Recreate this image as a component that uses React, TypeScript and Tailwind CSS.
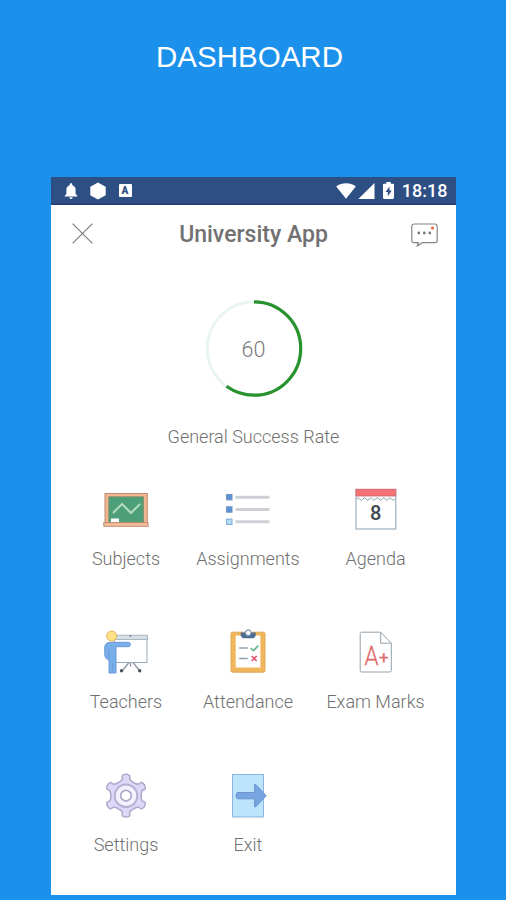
import type { ReactNode } from "react";

const RATE = 60;

const SubjectsIcon = () => (
  <svg className="w-12 h-12" viewBox="0 0 48 48" fill="none">
    <rect x="3" y="7.500" width="42.300" height="29" fill="#f0b694" stroke="#c08a6d" strokeWidth="1" />
    <rect x="6.800" y="10.800" width="34.800" height="25.500" fill="#4c9f78" stroke="#8e8a68" strokeWidth=".8" />
    <path d="M11 27l9-9 9 9 9-9" stroke="#b5dcc0" strokeWidth="2" />
    <rect x="9" y="32.500" width="8" height="3.800" fill="#fff" />
    <rect x="1.800" y="36.700" width="44.300" height="3.600" fill="#f5c09e" stroke="#c08a6d" strokeWidth="1" />
  </svg>
);

const AssignmentsIcon = () => (
  <svg className="w-12 h-12" viewBox="0 0 48 48" fill="none">
    <path d="M11.500 11.200h34M11.500 23.500h34M11.500 35.800h34" stroke="#cdd1d5" strokeWidth="3" />
    <rect x="2.600" y="8.500" width="5.400" height="5.400" fill="#5b93d6" stroke="#6d92c4" />
    <rect x="2.600" y="20.800" width="5.400" height="5.400" fill="#5b93d6" stroke="#6d92c4" />
    <rect x="2.600" y="33.100" width="5.400" height="5.400" fill="#b5def5" stroke="#7ba9d8" />
  </svg>
);

const AgendaIcon = () => (
  <svg className="w-12 h-12" viewBox="0 0 48 48" fill="none">
    <rect x="4" y="3.500" width="39.800" height="39.500" fill="#fff" stroke="#8b9fae" />
    <rect x="4" y="3.200" width="39.800" height="6.800" fill="#f47476" stroke="#d3686e" strokeWidth=".8" />
    <path
      d="M4.500 13q1.600-2.600 3.200 0t3.200 0 3.200 0 3.200 0 3.200 0 3.200 0 3.200 0 3.200 0 3.200 0 3.200 0 3.200 0 3.200 0"
      stroke="#8b9fae"
    />
    <text
      x="23.700"
      y="34"
      textAnchor="middle"
      fill="#3d4650"
      className="font-['Roboto',sans-serif] text-[20px] font-medium"
    >
      8
    </text>
  </svg>
);

const TeachersIcon = () => (
  <svg className="w-12 h-12" viewBox="0 0 48 48" fill="none">
    <path d="M27 33.500l-6.500 8M31 33.500l6.500 8M28.500 33.500v4" stroke="#8c98a3" strokeWidth="1.300" />
    <circle cx="19.500" cy="41.800" r="1.700" fill="#4b5258" />
    <circle cx="37.700" cy="41.800" r="1.700" fill="#4b5258" />
    <rect x="12.500" y="8.500" width="32.500" height="25" fill="#fff" stroke="#9babb8" />
    <rect x="12.500" y="6.200" width="33" height="4.300" fill="#d5e0e8" stroke="#9babb8" strokeWidth=".8" />
    <circle cx="28.300" cy="7" r="1" fill="#75899a" />
    <path
      d="M8 13.300H26.200a2 2 0 0 1 0 4.400H14V44H7V31C4 30.500 2.700 28 2.700 24.500V19C2.700 15.500 4.500 13.300 8 13.300z"
      fill="#78aeea"
      stroke="#6c9ad5"
    />
    <path d="M7 19.500V31M10.700 33.500v10" stroke="#6c9ad5" strokeWidth=".8" />
    <circle cx="9.700" cy="7.100" r="5" fill="#ffe188" stroke="#dfb45b" />
  </svg>
);

const AttendanceIcon = () => (
  <svg className="w-12 h-12" viewBox="0 0 48 48" fill="none">
    <rect x="7" y="3.200" width="34" height="40" rx="1.500" fill="#f1b65b" stroke="#dfa958" />
    <rect x="11.700" y="6.500" width="24.700" height="32" fill="#fff" />
    <path d="M16.700 3.500h4.500a3 3 0 0 1 6 0h4.500V7l-2 2.300h-11l-2-2.300z" fill="#4d6d94" />
    <circle cx="24.200" cy="3.800" r="2.600" fill="#fff" stroke="#8ba0b8" strokeWidth=".9" />
    <path d="M15.200 19h8.500M15.200 29.500h8.500" stroke="#93a0ab" strokeWidth="1.400" />
    <path d="M26.700 19l2.700 2.600 5-5" stroke="#65b889" strokeWidth="1.600" />
    <path d="M27.700 27l5 5M32.700 27l-5 5" stroke="#db5470" strokeWidth="1.600" />
  </svg>
);

const ExamMarksIcon = () => (
  <svg className="w-12 h-12" viewBox="0 0 48 48" fill="none">
    <path
      d="M9.700 3.200h19l10.600 11v27.300a1.500 1.500 0 0 1-1.500 1.500H9.700a1.500 1.500 0 0 1-1.500-1.500V4.700a1.500 1.500 0 0 1 1.500-1.500z"
      fill="#fff"
      stroke="#93a0a8"
    />
    <path d="M28.700 3.500v10.700h10.500" stroke="#93a0a8" />
    <text
      y="35.500"
      fill="#e06a6a"
      className="font-['Roboto',sans-serif] text-[25px] font-light"
      stroke="#e06a6a"
      strokeWidth=".3"
    >
      <tspan x="12.500" textLength="14" lengthAdjust="spacingAndGlyphs">A</tspan>
      <tspan x="27" dy="-1.500" className="text-[17px] font-normal">+</tspan>
    </text>
  </svg>
);

const gearAngles = [0, 60, 120, 180, 240, 300];

const SettingsIcon = () => (
  <svg className="w-12 h-12" viewBox="0 0 48 48" fill="none">
    <g fill="#d8d2f5" stroke="#b1a9ca" strokeWidth="2">
      <circle cx="24" cy="23.700" r="15" />
      {gearAngles.map((a) => (
        <path key={a} d="M17 11l3.500-3.500V3.800q3.500-2.400 7 0v3.700L31 11z" transform={`rotate(${a} 24 23.700)`} />
      ))}
    </g>
    <g fill="#ddd7f8">
      <circle cx="24" cy="23.700" r="14.500" />
      {gearAngles.map((a) => (
        <path key={a} d="M17 12l4-4.200V4q3-1.800 6 0v3.800L31 12z" transform={`rotate(${a} 24 23.700)`} />
      ))}
    </g>
    <circle cx="24" cy="23.700" r="11.300" fill="#f5f2ff" stroke="#b9b1d3" strokeWidth="2" />
    <circle cx="24" cy="23.700" r="5.300" fill="#fff" stroke="#b1a9ca" strokeWidth="1.800" />
  </svg>
);

const ExitIcon = () => (
  <svg className="w-12 h-12" viewBox="0 0 48 48" fill="none">
    <rect x="8.500" y="2.500" width="31" height="42.500" fill="#bce4fb" stroke="#8fb5de" />
    <path
      d="M13.700 20.500h16.800v-7.400q.3-1.500 1.500-.4l10.200 11L32 34.600q-1.200 1-1.500-.5v-7.300H13.700a2 2 0 0 1-1.500-1.700v-3a2 2 0 0 1 1.500-1.600z"
      fill="#77a5df"
      stroke="#6a93d0"
    />
  </svg>
);

type MenuItem = {
  label: string;
  icon: ReactNode;
};

const menu: MenuItem[] = [
  { label: "Subjects", icon: <SubjectsIcon /> },
  { label: "Assignments", icon: <AssignmentsIcon /> },
  { label: "Agenda", icon: <AgendaIcon /> },
  { label: "Teachers", icon: <TeachersIcon /> },
  { label: "Attendance", icon: <AttendanceIcon /> },
  { label: "Exam Marks", icon: <ExamMarksIcon /> },
  { label: "Settings", icon: <SettingsIcon /> },
  { label: "Exit", icon: <ExitIcon /> },
];

const StatusBar = () => (
  <div className="h-[28px] pt-px bg-[#2e4f84] border-b-2 border-[#294277] flex items-center justify-between pl-[13px] pr-[8px] text-white">
    <div className="flex items-center gap-[12px]">
      <svg className="w-[14px] h-[16px]" viewBox="0 0 14 16" fill="currentColor">
        <path d="M7 .3c.8 0 1.300.5 1.300 1.300v.6c2.200.6 3.300 2.400 3.300 4.800v4l1.700 1.700v.8H.7v-.8L2.400 11V7c0-2.400 1.100-4.200 3.300-4.800v-.6C5.700.8 6.200.3 7 .3zM5.300 14.200h3.400a1.700 1.700 0 0 1-3.400 0z" />
      </svg>
      <svg className="w-[16px] h-[18px]" viewBox="0 0 16 18" fill="currentColor">
        <path d="M8 .4l7.700 4.400v8.400L8 17.600.3 13.200V4.800z" />
      </svg>
      <span className="w-[13px] h-[13px] ml-px rounded-[1px] bg-white text-[#2e4f84] text-[10px] leading-[13px] font-black text-center font-['Roboto',sans-serif]">
        A
      </span>
    </div>
    <div className="flex items-center">
      <svg className="w-[20px] h-[16px]" viewBox="0 0 20 16" fill="currentColor">
        <path d="M10 15.700L.2 3.600C3 1.400 6.300.3 10 .3s7 1.100 9.800 3.300z" />
      </svg>
      <svg className="w-[17px] h-[16px] ml-[2px]" viewBox="0 0 17 16" fill="currentColor">
        <path d="M16.500 0v16H.3z" />
      </svg>
      <svg className="w-[11px] h-[17px] ml-[8px] mr-[8px]" viewBox="0 0 11 17">
        <path
          d="M3.300 0h4.400v1.700h2.100c.7 0 1.200.5 1.200 1.200v12.900c0 .7-.5 1.200-1.200 1.200H1.200C.5 17 0 16.500 0 15.800V2.900c0-.7.5-1.200 1.200-1.200h2.100z"
          fill="#fff"
        />
        <path d="M6.500 4.500L2.500 10h2.300v4.200l4-5.600H6.500z" fill="#2e4f84" />
      </svg>
      <span className="text-[18px] leading-[20px] font-medium">18:18</span>
    </div>
  </div>
);

const Header = () => (
  <div className="h-[58px] flex items-center justify-between pl-[21px] pr-[18px]">
    <svg className="w-[21px] h-[21px] -mt-[2px]" viewBox="0 0 21 21" fill="none">
      <path d="M.6.600l19.800 19.800M20.400.600L.6 20.400" stroke="#7d7d7d" strokeWidth="1.200" />
    </svg>
    <h2 className="pl-[4px] pt-[2px] text-[23px] leading-[28px] font-medium text-[#717171]">
      University App
    </h2>
    <svg className="w-[27px] h-[24px] mt-[2px]" viewBox="0 0 27 24" fill="none">
      <path
        d="M3 1h21a2.200 2.200 0 0 1 2.200 2.200v14.300a2.200 2.200 0 0 1-2.200 2.200H11.500L6.300 23l1-3.300H3a2.200 2.200 0 0 1-2.200-2.200V3.200A2.200 2.200 0 0 1 3 1z"
        stroke="#858585"
        strokeWidth="1.200"
      />
      <circle cx="7.800" cy="10" r="1.400" fill="#777" />
      <circle cx="13.300" cy="10" r="1.400" fill="#777" />
      <circle cx="18.800" cy="10" r="1.400" fill="#777" />
      <circle cx="21.500" cy="5" r="1.500" fill="#ee5b38" />
    </svg>
  </div>
);

const SuccessRate = () => (
  <div className="flex flex-col items-center pt-[37px] pl-px">
    <svg className="w-[98px] h-[98px]" viewBox="0 0 98 98" fill="none">
      <circle cx="49" cy="48.500" r="46.700" stroke="#e8f5ec" strokeWidth="2.800" />
      <circle
        cx="49"
        cy="48.500"
        r="46.700"
        pathLength="100"
        stroke="#27922e"
        strokeWidth="3.200"
        strokeDasharray={`${RATE} 100`}
        transform="rotate(-90 49 48.500)"
      />
      <text
        x="48.500"
        y="57"
        textAnchor="middle"
        fill="#7a7a7a"
        className="font-['Roboto',sans-serif] text-[21.500px] font-light"
      >
        {RATE}
      </text>
    </svg>
    <p className="mt-[27px] text-[18px] leading-[24px] font-light text-[#707070]">
      General Success Rate
    </p>
  </div>
);

const App = () => {
  return (
    <div className="w-full h-[900px] bg-[#1c91ec] flex flex-col items-center overflow-hidden font-['Roboto',sans-serif]">
      <h1 className="h-[177px] pt-[39px] pr-[7px] text-[29.5px] leading-[36px] text-white font-['Liberation_Sans',sans-serif]">
        DASHBOARD
      </h1>
      <div className="w-[405px] h-[718px] bg-white">
        <StatusBar />
        <Header />
        <SuccessRate />
        <div className="mt-[37px] pl-[14.5px] grid grid-cols-[122px_122px_133px] auto-rows-[143px]">
          {menu.map((item) => (
            <button key={item.label} className="flex flex-col items-center justify-start">
              {item.icon}
              <span className="mt-[13px] text-[18px] leading-[24px] font-light text-[#707070] whitespace-nowrap">
                {item.label}
              </span>
            </button>
          ))}
        </div>
      </div>
    </div>
  );
};

export default App;
